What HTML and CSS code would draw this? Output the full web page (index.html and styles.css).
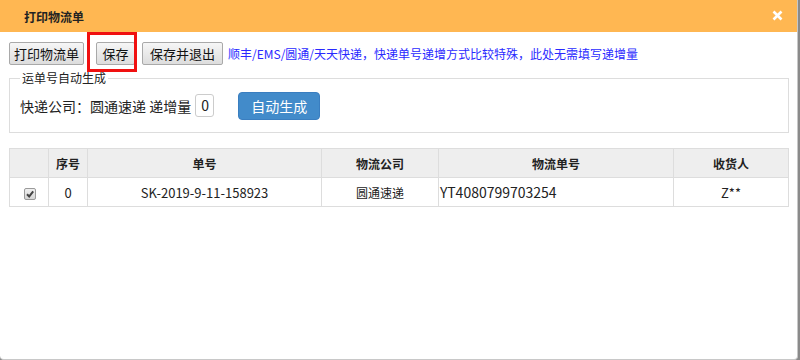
FILE: index.html
```html
<!DOCTYPE html>
<html lang="zh-CN">
<head>
    <meta charset="UTF-8">
    <title>打印物流单</title>
    <link rel="stylesheet" href="styles.css">
</head>
<body>
    <div class="dialog">
        <div class="dialog-head">
            <span class="dialog-title">打印物流单</span>
            <span class="dialog-close">
                <svg width="11" height="11" viewBox="0 0 11 11"><path d="M1.5 1.5 L9.5 9.5 M9.5 1.5 L1.5 9.5" stroke="#fff" stroke-width="2.6"/></svg>
            </span>
        </div>

        <div class="dialog-body">
            <div class="toolbar">
                <button class="btn btn-print">打印物流单</button>
                <button class="btn btn-save">保存</button>
                <button class="btn btn-exit">保存并退出</button>
                <span class="tip">顺丰/EMS/圆通/天天快递，快递单号递增方式比较特殊，此处无需填写递增量</span>
                <div class="mark"></div>
            </div>

            <fieldset class="auto-box">
                <legend>运单号自动生成</legend>
                <div class="auto-row">
                    <span>快递公司：圆通速递 递增量</span>
                    <span class="step-input">0</span>
                    <button class="btn-primary">自动生成</button>
                </div>
            </fieldset>

            <table class="grid">
                <thead>
                    <tr>
                        <th class="c1"></th>
                        <th class="c2">序号</th>
                        <th class="c3">单号</th>
                        <th class="c4">物流公司</th>
                        <th class="c5">物流单号</th>
                        <th class="c6">收货人</th>
                    </tr>
                </thead>
                <tbody>
                    <tr>
                        <td><span class="check">
                            <svg width="10" height="10" viewBox="0 0 10 10"><path d="M2 5.2 L4.2 7.4 L8.2 2.4" fill="none" stroke="#444" stroke-width="2"/></svg>
                        </span></td>
                        <td>0</td>
                        <td>SK-2019-9-11-158923</td>
                        <td class="company">圆通速递</td>
                        <td class="track-no">YT4080799703254</td>
                        <td>Z**</td>
                    </tr>
                </tbody>
            </table>
        </div>
    </div>
</body>
</html>
```

FILE: styles.css
```css
body {
    margin: 0;
    background-color: #8a8a8a;
    font-family: "Noto Sans CJK SC", "Liberation Sans", sans-serif;
    color: #222;
}
.dialog {
    width: 797px;
    height: 359px;
    background-color: #fff;
    border-right: 1px solid #c8c8c8;
    border-bottom: 1px solid #c8c8c8;
    border-radius: 0 0 4px 4px;
    overflow: hidden;
}
.dialog-head {
    height: 32px;
    background-color: #ffb752;
    display: flex;
    align-items: center;
    justify-content: space-between;
    padding: 0 14px 0 24px;
}
.dialog-title {
    font-size: 12px;
    font-weight: bold;
    color: #222;
}
.dialog-close {
    display: flex;
    margin-top: -2px;
}
.dialog-body {
    padding: 10px 8px 0 9px;
}
.toolbar {
    position: relative;
    display: flex;
    align-items: center;
    height: 23px;
}
.btn {
    height: 23px;
    padding: 0;
    font-family: inherit;
    font-size: 13px;
    color: #111;
    background: linear-gradient(#f6f6f6, #dddddd);
    border: 1px solid #a9a9a9;
    border-radius: 2px;
    line-height: 20px;
}
.btn-print {
    width: 75px;
}
.btn-save {
    width: 39px;
    margin-left: 12px;
}
.btn-exit {
    width: 81px;
    margin-left: 7px;
}
.tip {
    font-size: 12px;
    color: #2a2aff;
    margin-left: 5px;
}
.mark {
    position: absolute;
    left: 78px;
    top: -10px;
    width: 44px;
    height: 34px;
    border: 3px solid #f01010;
}
.auto-box {
    margin: 5px 0 0 0;
    padding: 6px 10px 12px 10px;
    border: 1px solid #dddddd;
    min-width: 0;
}
.auto-box legend {
    font-size: 12px;
    line-height: 16px;
    padding: 0 2px;
    color: #222;
}
.auto-row {
    display: flex;
    align-items: center;
    font-size: 14px;
}
.step-input {
    width: 19px;
    height: 23px;
    box-sizing: border-box;
    margin: -2px 0 0 4px;
    border: 1px solid #cccccc;
    border-radius: 3px;
    text-align: right;
    padding-right: 4px;
    line-height: 21px;
}
.btn-primary {
    margin-left: 24px;
    width: 82px;
    height: 28px;
    background-color: #428bca;
    color: #fff;
    border: 1px solid #3a7ec0;
    border-radius: 4px;
    font-family: inherit;
    font-size: 14px;
}
.grid {
    margin-top: 15px;
    width: 780px;
    border-collapse: collapse;
    table-layout: fixed;
    font-size: 13px;
}
.grid th,
.grid td {
    border: 1px solid #dddddd;
    height: 28px;
    padding: 0;
    text-align: center;
}
.grid th {
    background-color: #eeeeee;
    font-weight: bold;
    font-size: 12px;
}
.c1 { width: 38px; }
.c2 { width: 38px; }
.c3 { width: 233px; }
.c4 { width: 116px; }
.c5 { width: 234px; }
.grid td.company {
    font-size: 12px;
}
.grid td.track-no {
    text-align: left;
    padding-left: 1px;
    font-size: 14px;
}
.check {
    display: inline-flex;
    align-items: center;
    justify-content: center;
    width: 12px;
    height: 12px;
    box-sizing: border-box;
    border: 1px solid #9a9a9a;
    border-radius: 2px;
    background: linear-gradient(#f0f0f0, #d6d6d6);
    vertical-align: middle;
    margin-left: 1px;
}
```
